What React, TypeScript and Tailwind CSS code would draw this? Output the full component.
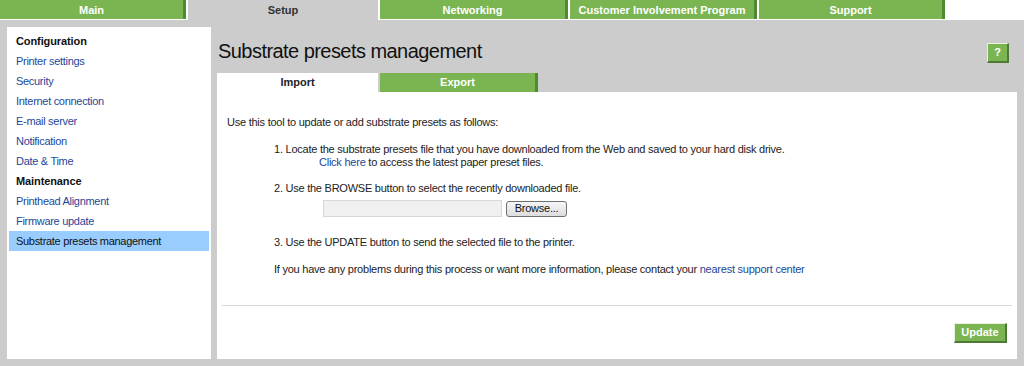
import React from "react";

const font = { fontFamily: '"Liberation Sans", Arial, sans-serif' };

function TopTab({ label, active, w }: { label: string; active?: boolean; w: string }) {
  if (active) {
    return (
      <div className={`${w} h-[20px] bg-[#cccccc] mr-[2px] flex items-start justify-center pt-[2px] text-[11px] font-bold text-[#333333]`}>
        {label}
      </div>
    );
  }
  return (
    <div className={`${w} h-[19px] bg-[#7bb552] border-r-[3px] border-[#4f8a31] mr-[2px] flex items-start justify-center pt-[2px] text-[11px] font-bold text-white`}>
      {label}
    </div>
  );
}

const sideItems: { label: string; kind: "head" | "link" | "active" }[] = [
  { label: "Configuration", kind: "head" },
  { label: "Printer settings", kind: "link" },
  { label: "Security", kind: "link" },
  { label: "Internet connection", kind: "link" },
  { label: "E-mail server", kind: "link" },
  { label: "Notification", kind: "link" },
  { label: "Date & Time", kind: "link" },
  { label: "Maintenance", kind: "head" },
  { label: "Printhead Alignment", kind: "link" },
  { label: "Firmware update", kind: "link" },
  { label: "Substrate presets management", kind: "active" },
];

export default function App() {
  return (
    <div style={font} className="w-[1024px] h-[366px] bg-[#cccccc] overflow-hidden flex flex-col">
      {/* top nav */}
      <div className="h-[20px] bg-white flex items-start shrink-0">
        <TopTab label="Main" w="w-[186px]" />
        <TopTab label="Setup" active w="w-[190px]" />
        <TopTab label="Networking" w="w-[188px]" />
        <TopTab label="Customer Involvement Program" w="w-[187px]" />
        <TopTab label="Support" w="w-[186px]" />
      </div>

      <div className="flex-1 flex gap-[6px] px-[7px] pt-[7px] pb-[7px]">
        {/* sidebar */}
        <div className="w-[204px] bg-white pt-[4px] px-[2px]">
          {sideItems.map((it) => (
            <div
              key={it.label}
              className={`h-[20px] flex items-center pl-[7px] text-[11px] ${
                it.kind === "head"
                  ? "font-bold text-[#111111] tracking-[-0.1px]"
                  : it.kind === "active"
                  ? "bg-[#99ccff] text-[#111111] tracking-[-0.3px]"
                  : "text-[#23479a] tracking-[-0.3px]"
              }`}
            >
              {it.label}
            </div>
          ))}
        </div>

        {/* main */}
        <div className="w-[800px] flex flex-col">
          <div className="h-[46px] flex items-center justify-between pl-[1px] pr-[8px]">
            <div className="text-[20px] leading-[24px] text-[#111111] pt-[1px] tracking-[-0.55px]">Substrate presets management</div>
            <div className="w-[22px] h-[20px] mt-[6px] bg-[#7bb552] border-t border-l border-[#e8f3df] border-r-2 border-b-2 border-r-[#4f7a35] border-b-[#4f7a35] flex items-center justify-center text-[11px] font-bold text-white">
              ?
            </div>
          </div>

          <div className="h-[19px] flex items-stretch">
            <div className="w-[161px] bg-white flex items-center justify-center text-[11px] font-bold text-[#222222]">Import</div>
            <div className="w-[2px]" />
            <div className="w-[158px] bg-[#7bb552] border-r-[3px] border-[#4f8a31] flex items-center justify-center text-[11px] font-bold text-white">
              Export
            </div>
          </div>

          <div className="flex-1 bg-white flex flex-col text-[11px] leading-[13px] text-[#222222] tracking-[-0.24px]">
            <div className="pl-[10px] mt-[24px]">Use this tool to update or add substrate presets as follows:</div>
            <div className="pl-[57px] mt-[14px]">1. Locate the substrate presets file that you have downloaded from the Web and saved to your hard disk drive.</div>
            <div className="pl-[102px]">
              <span className="text-[#23479a]">Click here</span> to access the latest paper preset files.
            </div>
            <div className="pl-[57px] mt-[13px]">2. Use the BROWSE button to select the recently downloaded file.</div>
            <div className="pl-[106px] mt-[5px] flex items-center gap-[4px]">
              <div className="w-[179px] h-[17px] bg-[#f0f0f0] border border-[#d8d8d8]" />
              <div className="w-[61px] h-[16px] rounded-[3px] border border-[#707070] bg-gradient-to-b from-[#f6f6f6] to-[#dddddd] flex items-center justify-center text-[11px] text-[#111111]">
                Browse...
              </div>
            </div>
            <div className="pl-[57px] mt-[19px]">3. Use the UPDATE button to send the selected file to the printer.</div>
            <div className="pl-[57px] mt-[14px]">
              If you have any problems during this process or want more information, please contact your{" "}
              <span className="text-[#23479a]">nearest support center</span>
            </div>
            <div className="mx-[5px] mt-[29px] h-[2px] bg-[#d9d9d9] border-b border-white" />
            <div className="flex justify-end pr-[10px] mt-[16px]">
              <div className="w-[53px] h-[20px] bg-[#7bb552] border-t border-l border-[#e8f3df] border-r-2 border-b-2 border-r-[#4f7a35] border-b-[#4f7a35] flex items-center justify-center text-[11px] font-bold text-white tracking-normal">
                Update
              </div>
            </div>
          </div>
        </div>
      </div>
    </div>
  );
}
